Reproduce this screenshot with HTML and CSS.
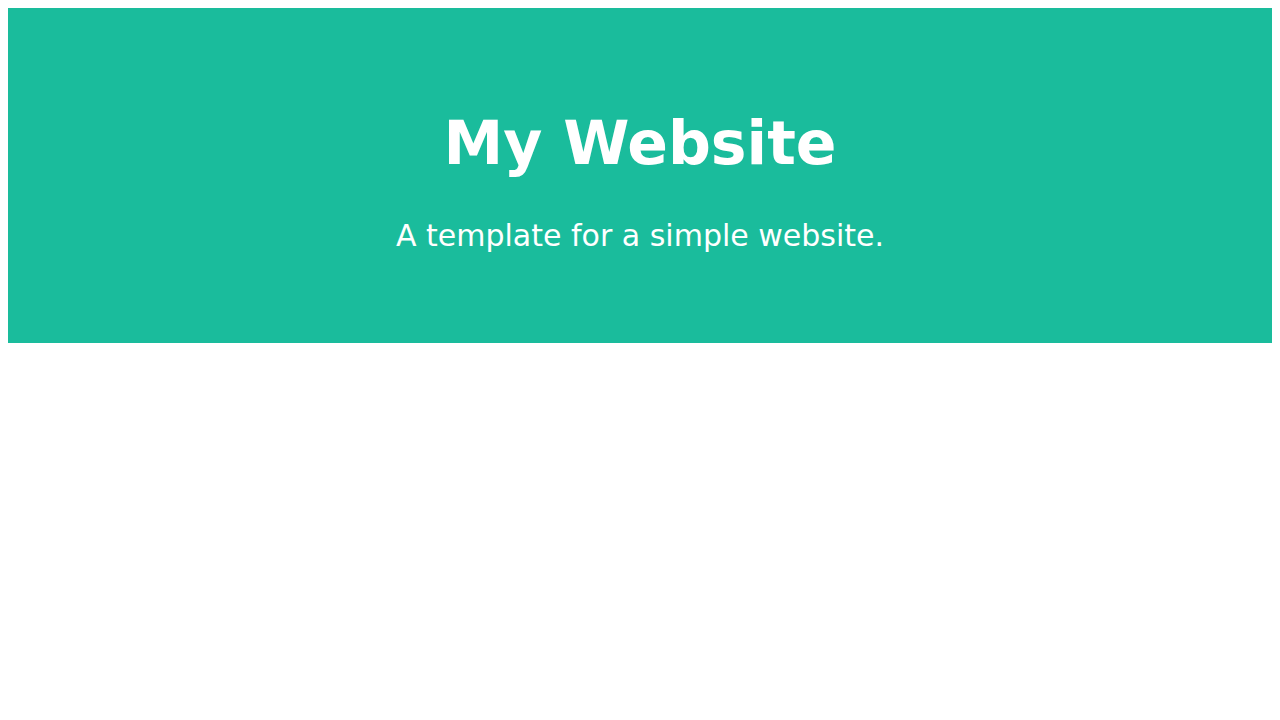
FILE: index.html
```html
<!DOCTYPE html>
<html lang="en">
<head>
<meta charset="utf-8">
<title>My Website</title>
<link rel="stylesheet" href="styles.css">
</head>
<body>
<div class="header">
  <h1>My Website</h1>
  <p>A template for a simple website.</p>
</div>
</body>
</html>
```
FILE: styles.css
```css
body {
  margin: 8px;
  font-family: "DejaVu Sans", sans-serif;
  background: #ffffff;
}
.header {
  padding: 60px;
  text-align: center;
  background: #1abc9c;
  color: #ffffff;
  font-size: 30px;
}
.header h1 {
  font-size: 2em;
  margin: 0.67em 0;
}
.header p {
  margin: 1em 0;
}
```
